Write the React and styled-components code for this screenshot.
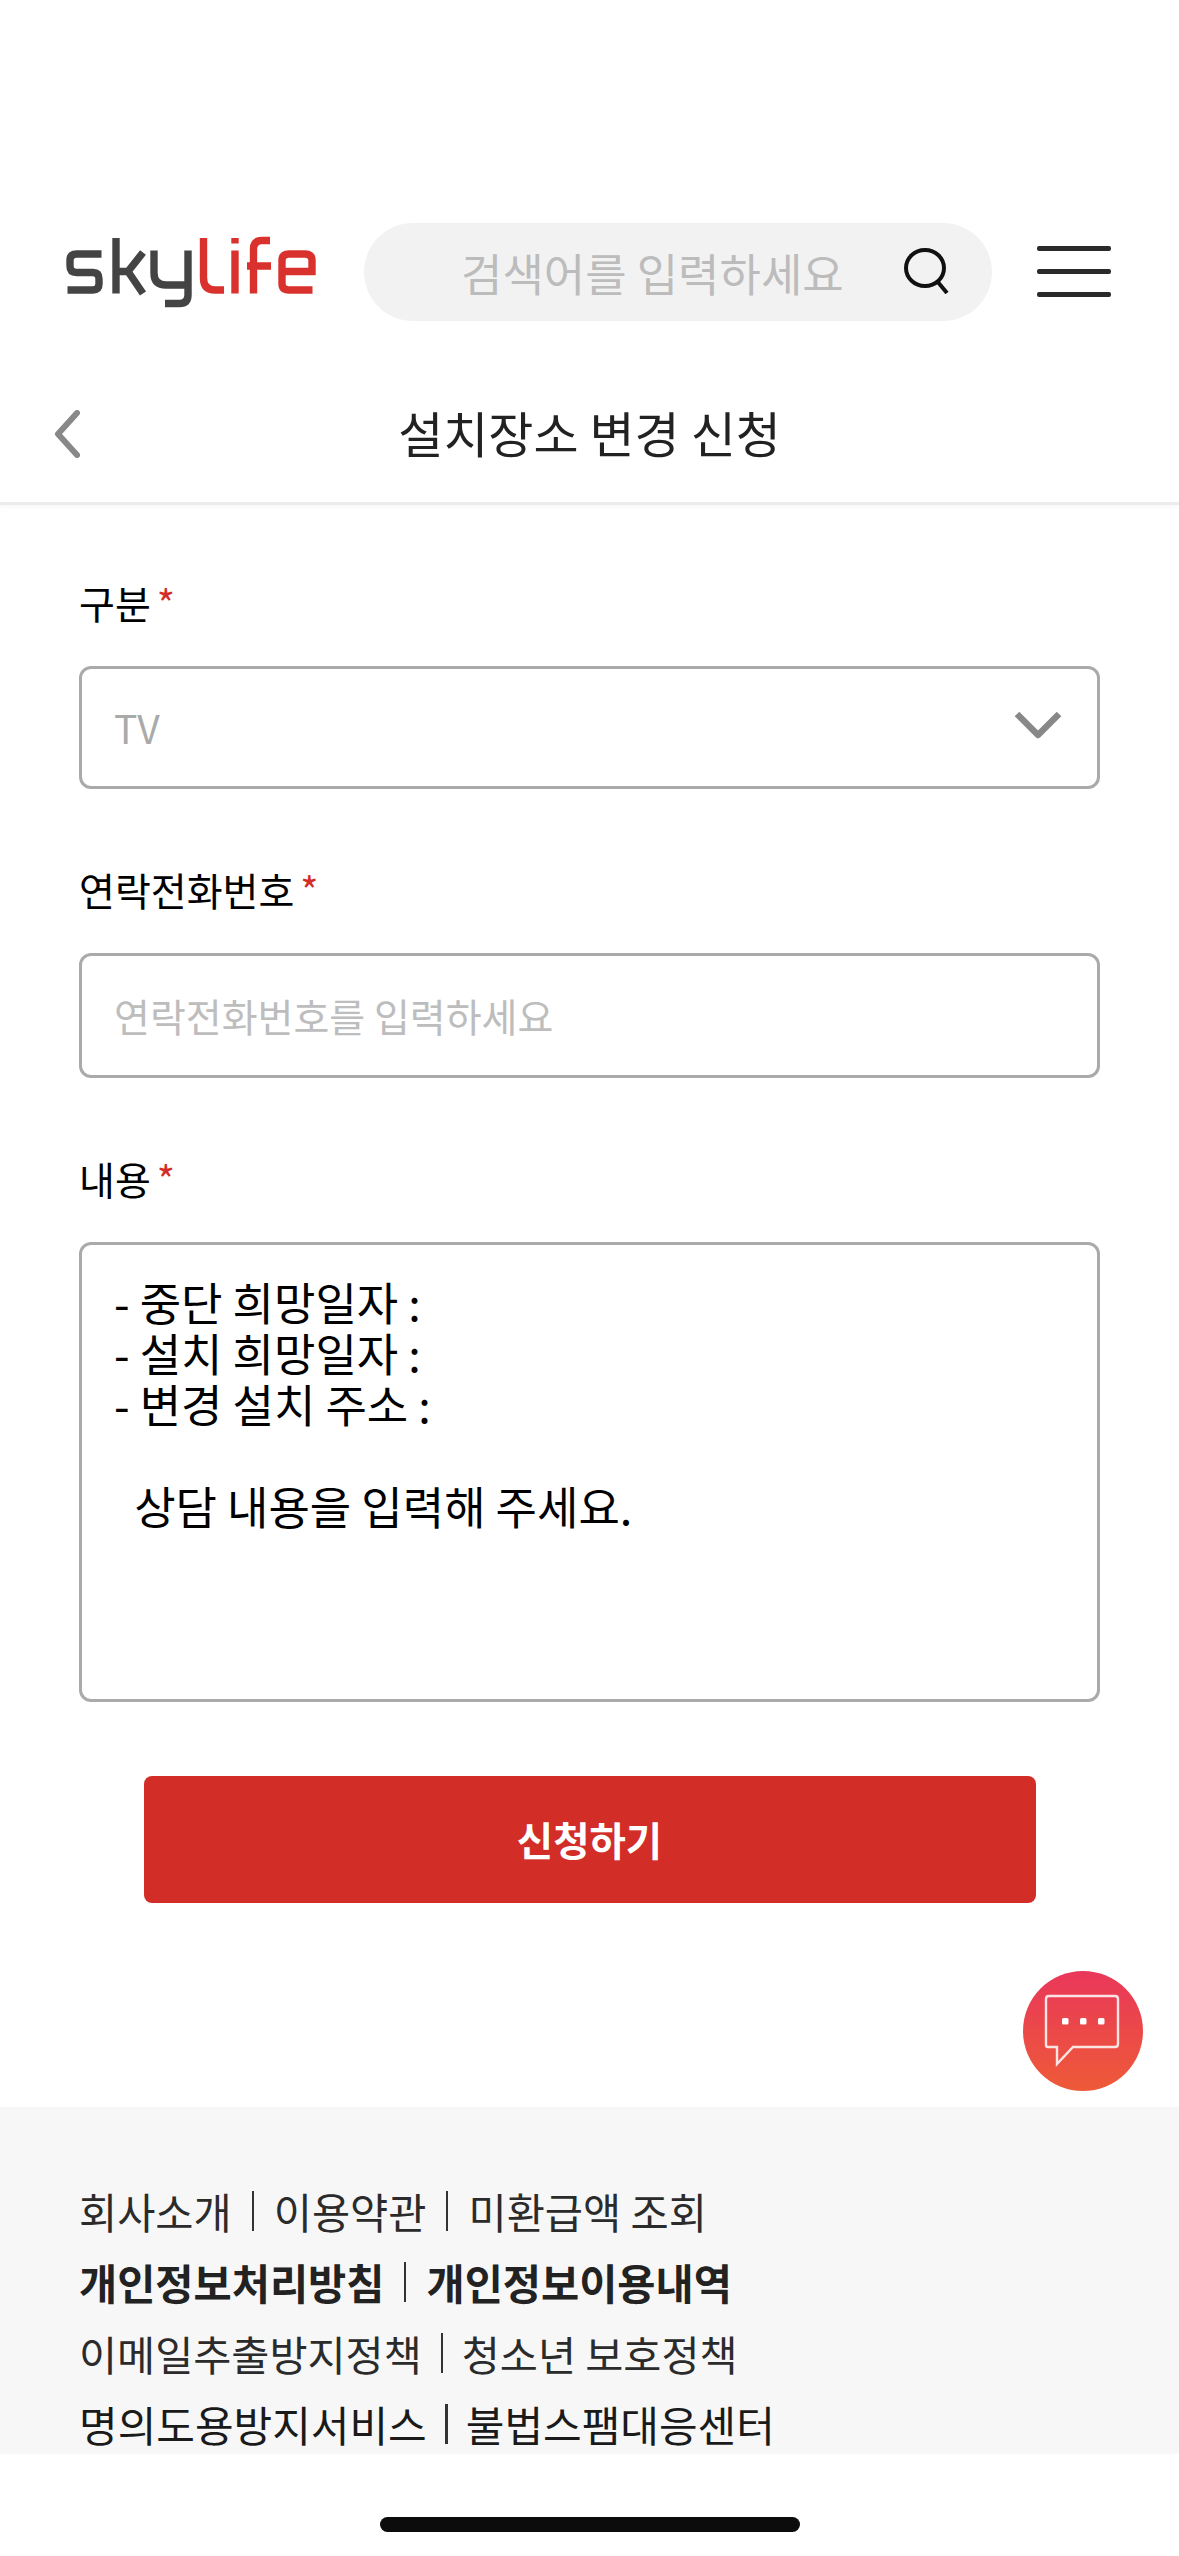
import React from 'react';
import styled, { createGlobalStyle } from 'styled-components';

const GlobalStyle = createGlobalStyle`
  html, body {
    margin: 0;
    padding: 0;
    background: #fff;
    font-family: "Noto Sans CJK KR", "Noto Sans", sans-serif;
  }
  * {
    box-sizing: border-box;
  }
`;

const Screen = styled.div`
  position: relative;
  width: 1179px;
  height: 2556px;
  overflow: hidden;
  display: flex;
  flex-direction: column;
  background: #fff;
`;

const Viewport = styled.div`
  position: relative;
  height: 2454px;
  overflow: hidden;
  flex: none;
`;

const TopBar = styled.header`
  display: flex;
  align-items: center;
  height: 98px;
  margin-top: 223px;
  padding-left: 40px;
`;

const LogoSvg = styled.svg`
  display: block;
  flex: none;
  width: 300px;
  height: 110px;
  margin-bottom: 14px;
  filter: blur(0.5px);
`;

const SearchPill = styled.div`
  display: flex;
  align-items: center;
  width: 628px;
  height: 98px;
  margin-left: 24px;
  padding: 0 42px 0 97px;
  border-radius: 49px;
  background: #f2f2f2;
`;

const SearchInput = styled.input`
  flex: 1;
  min-width: 0;
  border: 0;
  padding: 0;
  background: transparent;
  font: 400 45px "Noto Sans CJK KR", sans-serif;
  outline: none;

  &::placeholder {
    color: #bcbcbc;
    opacity: 1;
  }
`;

const SearchGlyph = styled.svg`
  flex: none;
  margin-bottom: 3px;
`;

const Burger = styled.div`
  display: flex;
  flex-direction: column;
  gap: 18px;
  width: 74px;
  margin: 0 0 2px 45px;
`;

const BurgerBar = styled.span`
  display: block;
  height: 5px;
  border-radius: 2px;
  background: #2a2a2a;
`;

const TitleBar = styled.div`
  display: grid;
  grid-template-columns: 1fr auto 1fr;
  align-items: center;
  height: 184px;
  padding-top: 40px;
  border-bottom: 3px solid #ececec;
  box-shadow: 0 2px 3px rgba(0, 0, 0, 0.03);
`;

const BackGlyph = styled.svg`
  display: block;
  margin: 5px 0 0 54px;
`;

const Title = styled.h1`
  margin: 0;
  color: #222;
  font-size: 49px;
  font-weight: 400;
  line-height: 64px;
`;

const Form = styled.form`
  display: flex;
  flex-direction: column;
  gap: 71px;
  padding: 68px 79px 0;
`;

const Field = styled.div`
  display: flex;
  flex-direction: column;
  gap: 35px;
`;

const Label = styled.label`
  color: #000;
  font-size: 39px;
  line-height: 58px;
`;

const Required = styled.span`
  margin-left: 6px;
  color: #d32d27;
`;

const SelectWrap = styled.div`
  position: relative;
`;

const boxStyles = `
  display: block;
  width: 100%;
  border: 3px solid #aaa;
  border-radius: 12px;
  background: #fff;
  outline: none;
  font-family: "Noto Sans CJK KR", sans-serif;
`;

const Select = styled.select`
  ${boxStyles}
  height: 123px;
  padding: 0 32px 2px;
  color: #aaa;
  font-size: 39px;
  appearance: none;
`;

const SelectArrow = styled.svg`
  position: absolute;
  top: 45px;
  right: 38px;
  width: 48px;
  height: 28px;
`;

const TextInput = styled.input`
  ${boxStyles}
  height: 125px;
  padding: 0 32px 2px;
  font-size: 39px;

  &::placeholder {
    color: #bdbdbd;
    opacity: 1;
  }
`;

const TextArea = styled.textarea`
  ${boxStyles}
  height: 460px;
  padding: 31px 32px;
  color: #000;
  font-size: 45px;
  line-height: 51px;
  resize: none;
`;

const SubmitButton = styled.button`
  display: block;
  width: 892px;
  height: 127px;
  margin: 74px auto 0;
  padding: 0 0 2px;
  border: 0;
  border-radius: 8px;
  background: #d32d27;
  color: #fff;
  font-family: "Noto Sans CJK KR", sans-serif;
  font-size: 39.5px;
  font-weight: 700;
`;

const ChatButton = styled.div`
  position: absolute;
  top: 1971px;
  right: 36px;
  width: 120px;
  height: 120px;
  border-radius: 50%;
  background: linear-gradient(180deg, #e9375a 0%, #ee5a38 100%);
`;

const Footer = styled.footer`
  display: flex;
  flex-direction: column;
  gap: 17px;
  height: 347px;
  margin-top: 204px;
  padding: 77px 79px 0;
  background: #f7f7f7;
`;

const FooterRow = styled.div`
  display: flex;
  align-items: center;
  height: 54px;
  color: ${(p) => p.$color || '#2b2b2b'};
  font-size: ${(p) => p.$size || 41.5}px;
  font-weight: ${(p) => (p.$bold ? 700 : 400)};
  line-height: 54px;
  white-space: pre;
`;

const Divider = styled.span`
  width: ${(p) => p.$width || 2}px;
  height: 40px;
  margin: 0 ${(p) => p.$gap || 20}px;
  background: #333;
`;

const HomeZone = styled.div`
  flex: 1;
  display: flex;
  justify-content: center;
  padding-top: 63px;
`;

const HomeBar = styled.div`
  width: 420px;
  height: 15px;
  border-radius: 8px;
  background: #0c0c0c;
`;

const SkylifeLogo = () => (
  <LogoSvg viewBox="0 0 300 110" fill="none" strokeWidth="7.4">
    <g stroke="#444">
      <path d="M61.5 44H36.5Q30 44 30 50.5V56Q30 62.5 36.5 62.5H53Q59 62.5 59 69V74Q59 80 53 80H27.5" />
      <path d="M76 28V83.5" />
      <path d="M79 61.5H88L103 42.5M88 61.5L103 83.5" />
      <path d="M114 40.5V63Q114 75 126 75H147" />
      <path d="M148 40.5V85Q148 93.5 139.5 93.5H125" />
    </g>
    <g stroke="#d9322e">
      <path d="M163.5 28V68Q163.5 80 175 80H184" />
      <path d="M195 28V33.5M195 40.5V83.5" />
      <path d="M230 30.5H222Q213.5 30.5 213.5 39V83.5M207 56H231" />
      <path d="M242 61.5H272V50.5Q272 44 265 44H249Q242 44 242 50.5V73.5Q242 80 249 80H272.5" />
    </g>
  </LogoSvg>
);

const SearchIcon = () => (
  <SearchGlyph width="46" height="46" viewBox="0 0 46 46" fill="none" stroke="#111" strokeWidth="4">
    <ellipse cx="21" cy="20" rx="19" ry="18" />
    <path d="M33 33L43 45" />
  </SearchGlyph>
);

const BackIcon = () => (
  <BackGlyph width="26" height="48" viewBox="0 0 26 48" fill="none" stroke="#888" strokeWidth="6" strokeLinecap="round" strokeLinejoin="round">
    <path d="M23 3L4 24L23 45" />
  </BackGlyph>
);

const ChatIcon = () => (
  <svg width="120" height="120" viewBox="0 0 120 120" fill="none">
    <path d="M26 25H92Q95 25 95 28V73Q95 76 92 76H50L34 93V76H25Q23 76 23 74V28Q23 25 26 25Z" stroke="#fff" strokeOpacity="0.85" strokeWidth="2.4" />
    <g fill="#fff">
      <rect x="39" y="47" width="6.5" height="6.5" rx="1.5" />
      <rect x="57" y="47" width="6.5" height="6.5" rx="1.5" />
      <rect x="75" y="47" width="6.5" height="6.5" rx="1.5" />
    </g>
  </svg>
);

const footerLinks = [
  { links: ['회사소개', '이용약관', '미환급액 조회'] },
  { bold: true, color: '#222', links: ['개인정보처리방침', '개인정보이용내역'] },
  { size: 41.4, gap: 19, links: ['이메일추출방지정책', '청소년 보호정책'] },
  { size: 42, color: '#1a1a1a', width: 3, gap: 18, links: ['명의도용방지서비스', '불법스팸대응센터'] },
];

const textAreaValue = `- 중단 희망일자 :
- 설치 희망일자 :
- 변경 설치 주소 :

  상담 내용을 입력해 주세요.`;

export default function App() {
  return (
    <Screen>
      <GlobalStyle />
      <Viewport>
        <TopBar>
          <SkylifeLogo />
          <SearchPill>
            <SearchInput placeholder="검색어를 입력하세요" />
            <SearchIcon />
          </SearchPill>
          <Burger>
            <BurgerBar />
            <BurgerBar />
            <BurgerBar />
          </Burger>
        </TopBar>

        <TitleBar>
          <BackIcon />
          <Title>설치장소 변경 신청</Title>
        </TitleBar>

        <Form>
          <Field>
            <Label>구분<Required>*</Required></Label>
            <SelectWrap>
              <Select defaultValue="TV">
                <option>TV</option>
              </Select>
              <SelectArrow viewBox="0 0 48 28" fill="none" stroke="#888" strokeWidth="6.5" strokeLinejoin="round">
                <path d="M3 3L24 24L45 3" />
              </SelectArrow>
            </SelectWrap>
          </Field>
          <Field>
            <Label>연락전화번호<Required>*</Required></Label>
            <TextInput placeholder="연락전화번호를 입력하세요" />
          </Field>
          <Field>
            <Label>내용<Required>*</Required></Label>
            <TextArea defaultValue={textAreaValue} />
          </Field>
        </Form>

        <SubmitButton type="button">신청하기</SubmitButton>

        <ChatButton>
          <ChatIcon />
        </ChatButton>

        <Footer>
          {footerLinks.map((row) => (
            <FooterRow key={row.links[0]} $bold={row.bold} $color={row.color} $size={row.size}>
              {row.links.map((text, i) => (
                <React.Fragment key={text}>
                  {i > 0 && <Divider $width={row.width} $gap={row.gap} />}
                  {text}
                </React.Fragment>
              ))}
            </FooterRow>
          ))}
        </Footer>
      </Viewport>
      <HomeZone>
        <HomeBar />
      </HomeZone>
    </Screen>
  );
}
